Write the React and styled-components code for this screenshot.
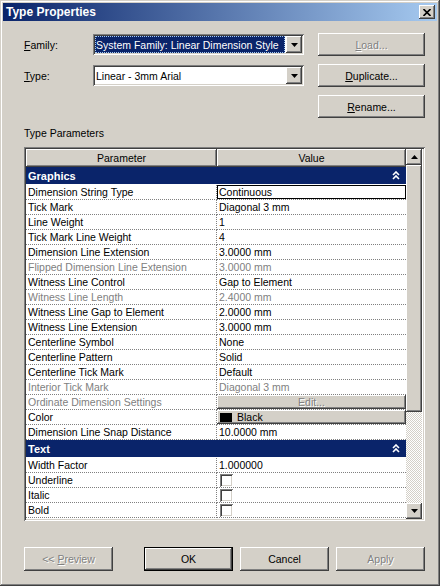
import React from "react";
import styled, { createGlobalStyle, css } from "styled-components";

const Global = createGlobalStyle`
  html, body { margin: 0; padding: 0; background: #d4d0c8; }
  body { font-family: "Liberation Sans", Arial, sans-serif; font-size: 10.5px; color: #000; }
`;

const raised = css`
  background: #d4d0c8;
  box-shadow: inset -1px -1px #404040, inset 1px 1px #fff, inset -2px -2px #808080, inset 2px 2px #d4d0c8;
`;

const sunken = css`
  box-shadow: inset 1px 1px #808080, inset -1px -1px #fff, inset 2px 2px #404040, inset -2px -2px #d4d0c8;
`;

const disabledText = css`
  color: #808080;
  text-shadow: 1px 1px #fff;
`;

const Window = styled.div`
  box-sizing: border-box;
  width: 440px;
  height: 586px;
  padding: 3px;
  background: #d4d0c8;
  box-shadow: inset -1px -1px #404040, inset 1px 1px #d4d0c8, inset -2px -2px #808080, inset 2px 2px #fff;
  display: flex;
  flex-direction: column;
`;

const TitleBar = styled.div`
  height: 18px;
  flex: none;
  display: flex;
  align-items: center;
  justify-content: space-between;
  padding: 0 2px 0 3px;
  background: linear-gradient(to right, #0a246a, #a6caf0);
  color: #fff;
  font-weight: bold;
  font-size: 12px;
`;

const CloseBtn = styled.div`
  ${raised};
  width: 16px;
  height: 14px;
  display: flex;
  align-items: center;
  justify-content: center;
`;

const Body = styled.div`
  flex: 1;
  display: flex;
  flex-direction: column;
  padding: 12px 12px 12px 21px;
`;

const Top = styled.div`
  display: flex;
  gap: 14px;
`;

const Fields = styled.div`
  width: 280px;
  display: flex;
  flex-direction: column;
  gap: 8px;
`;

const Field = styled.div`
  height: 23px;
  display: flex;
  align-items: center;
`;

const Label = styled.span`
  width: 69px;
`;

const Select = styled.div`
  ${sunken};
  box-sizing: border-box;
  width: 211px;
  height: 21px;
  background: #fff;
  display: flex;
  padding: 2px;
  gap: 1px;
`;

const SelectText = styled.div`
  flex: 1;
  display: flex;
  align-items: center;
  padding-left: 1px;
  overflow: hidden;
  white-space: nowrap;
  ${(p) =>
    p.$selected &&
    css`
      background: #0a246a;
      color: #fff;
      outline: 1px dotted #a6caf0;
      outline-offset: -1px;
    `}
`;

const ArrowBtn = styled.div`
  ${raised};
  width: 16px;
  flex: none;
  display: flex;
  align-items: center;
  justify-content: center;
`;

const SideButtons = styled.div`
  width: 107px;
  display: flex;
  flex-direction: column;
  gap: 8px;
`;

const Button = styled.div`
  ${raised};
  box-sizing: border-box;
  height: ${(p) => p.$h || 23}px;
  width: ${(p) => (p.$w ? `${p.$w}px` : "auto")};
  display: flex;
  align-items: center;
  justify-content: center;
  ${(p) => p.$disabled && disabledText};
  ${(p) =>
    p.$default &&
    css`
      box-shadow: inset 1px 1px #000, inset -1px -1px #000, inset -2px -2px #404040, inset 2px 2px #fff,
        inset -3px -3px #808080;
    `}
`;

const SectionLabel = styled.div`
  margin-top: 9px;
  line-height: 13px;
`;

const Table = styled.div`
  ${sunken};
  margin-top: 7px;
  height: 374px;
  box-sizing: border-box;
  padding: 2px;
  display: flex;
  background: #fff;
`;

const Grid = styled.div`
  width: 380px;
  display: flex;
  flex-direction: column;
`;

const Row = styled.div`
  display: grid;
  grid-template-columns: 191px 189px;
  height: ${(p) => p.$h || 15}px;
  box-sizing: border-box;
`;

const HeadCell = styled.div`
  ${raised};
  display: flex;
  align-items: center;
  justify-content: center;
`;

const GroupRow = styled.div`
  height: 18px;
  box-sizing: border-box;
  background: #0a246a;
  color: #fff;
  font-weight: bold;
  font-size: 11px;
  display: flex;
  align-items: center;
  justify-content: space-between;
  padding: 0 6px 0 2px;
  border-bottom: 1px solid #fff;
`;

const Cell = styled.div`
  box-sizing: border-box;
  display: flex;
  align-items: center;
  padding-left: 2px;
  white-space: nowrap;
  overflow: hidden;
  border-bottom: 1px dotted #808080;
  ${(p) => p.$param && "border-right: 1px dotted #808080;"}
  ${(p) => p.$muted && "color: #808080;"}
  ${(p) => p.$focus && "box-shadow: inset 0 0 0 1px #000;"}
  ${(p) => p.$flush && "padding: 0;"}
`;

const CellButton = styled.div`
  ${raised};
  flex: 1;
  height: 100%;
  display: flex;
  align-items: center;
  justify-content: ${(p) => (p.$left ? "flex-start" : "center")};
  padding-left: ${(p) => (p.$left ? "3px" : "0")};
  gap: 5px;
  ${(p) => p.$disabled && disabledText};
`;

const Swatch = styled.span`
  width: 12px;
  height: 9px;
  background: #000;
`;

const Check = styled.span`
  ${sunken};
  width: 13px;
  height: 13px;
  background: #fff;
  margin-left: 1px;
`;

const ScrollBar = styled.div`
  width: 16px;
  display: flex;
  flex-direction: column;
`;

const ScrollBtn = styled.div`
  ${raised};
  height: 16px;
  flex: none;
  display: flex;
  align-items: center;
  justify-content: center;
`;

const Thumb = styled.div`
  ${raised};
  height: 247px;
  flex: none;
`;

const Track = styled.div`
  flex: 1;
  background: repeating-conic-gradient(#fff 0 25%, #d4d0c8 0 50%) 0 0 / 2px 2px;
`;

const Footer = styled.div`
  margin-top: 26px;
  display: flex;
  justify-content: space-between;
`;

const FooterGroup = styled.div`
  display: flex;
  gap: 7px;
`;

const Tri = ({ up }) => (
  <svg width="7" height="4" viewBox="0 0 7 4">
    <path d={up ? "M3.5 0 L7 4 L0 4 Z" : "M0 0 L7 0 L3.5 4 Z"} fill="#000" />
  </svg>
);

const Chevrons = () => (
  <svg width="8" height="9" viewBox="0 0 8 9">
    <path d="M1 4 L4 1 L7 4 M1 8 L4 5 L7 8" stroke="#fff" strokeWidth="1.6" fill="none" />
  </svg>
);

const rows = [
  { group: "Graphics" },
  { p: "Dimension String Type", v: "Continuous", focus: true },
  { p: "Tick Mark", v: "Diagonal 3 mm" },
  { p: "Line Weight", v: "1" },
  { p: "Tick Mark Line Weight", v: "4" },
  { p: "Dimension Line Extension", v: "3.0000 mm" },
  { p: "Flipped Dimension Line Extension", v: "3.0000 mm", muted: true },
  { p: "Witness Line Control", v: "Gap to Element" },
  { p: "Witness Line Length", v: "2.4000 mm", muted: true },
  { p: "Witness Line Gap to Element", v: "2.0000 mm" },
  { p: "Witness Line Extension", v: "3.0000 mm" },
  { p: "Centerline Symbol", v: "None" },
  { p: "Centerline Pattern", v: "Solid" },
  { p: "Centerline Tick Mark", v: "Default" },
  { p: "Interior Tick Mark", v: "Diagonal 3 mm", muted: true },
  { p: "Ordinate Dimension Settings", kind: "edit", muted: true },
  { p: "Color", kind: "color", v: "Black" },
  { p: "Dimension Line Snap Distance", v: "10.0000 mm" },
  { group: "Text" },
  { p: "Width Factor", v: "1.000000" },
  { p: "Underline", kind: "check" },
  { p: "Italic", kind: "check" },
  { p: "Bold", kind: "check" },
];

const ValueCell = ({ r }) => {
  if (r.kind === "edit")
    return (
      <Cell $flush>
        <CellButton $disabled>Edit...</CellButton>
      </Cell>
    );
  if (r.kind === "color")
    return (
      <Cell $flush>
        <CellButton $left>
          <Swatch />
          {r.v}
        </CellButton>
      </Cell>
    );
  if (r.kind === "check")
    return (
      <Cell>
        <Check />
      </Cell>
    );
  return (
    <Cell $muted={r.muted} $focus={r.focus}>
      {r.v}
    </Cell>
  );
};

export default function App() {
  return (
    <>
      <Global />
      <Window>
        <TitleBar>
          <span>Type Properties</span>
          <CloseBtn>
            <svg width="8" height="7" viewBox="0 0 8 7">
              <path d="M0.5 0 L7.5 7 M7.5 0 L0.5 7" stroke="#000" strokeWidth="1.6" />
            </svg>
          </CloseBtn>
        </TitleBar>
        <Body>
          <Top>
            <Fields>
              <Field>
                <Label>
                  <u>F</u>amily:
                </Label>
                <Select>
                  <SelectText $selected>System Family: Linear Dimension Style</SelectText>
                  <ArrowBtn>
                    <Tri />
                  </ArrowBtn>
                </Select>
              </Field>
              <Field>
                <Label>
                  <u>T</u>ype:
                </Label>
                <Select>
                  <SelectText>Linear - 3mm Arial</SelectText>
                  <ArrowBtn>
                    <Tri />
                  </ArrowBtn>
                </Select>
              </Field>
            </Fields>
            <SideButtons>
              <Button $disabled>
                <span>
                  <u>L</u>oad...
                </span>
              </Button>
              <Button>
                <span>
                  <u>D</u>uplicate...
                </span>
              </Button>
              <Button>
                <span>
                  <u>R</u>ename...
                </span>
              </Button>
            </SideButtons>
          </Top>
          <SectionLabel>Type Parameters</SectionLabel>
          <Table>
            <Grid>
              <Row $h={18}>
                <HeadCell>Parameter</HeadCell>
                <HeadCell>Value</HeadCell>
              </Row>
              {rows.map((r, i) =>
                r.group ? (
                  <GroupRow key={i}>
                    <span>{r.group}</span>
                    <Chevrons />
                  </GroupRow>
                ) : (
                  <Row key={i}>
                    <Cell $param $muted={r.muted}>
                      {r.p}
                    </Cell>
                    <ValueCell r={r} />
                  </Row>
                )
              )}
            </Grid>
            <ScrollBar>
              <ScrollBtn>
                <Tri up />
              </ScrollBtn>
              <Thumb />
              <Track />
              <ScrollBtn>
                <Tri />
              </ScrollBtn>
            </ScrollBar>
          </Table>
          <Footer>
            <Button $w={89} $h={24} $disabled>
              <span>
                &lt;&lt; <u>P</u>review
              </span>
            </Button>
            <FooterGroup>
              <Button $w={89} $h={24} $default>
                OK
              </Button>
              <Button $w={89} $h={24}>
                Cancel
              </Button>
              <Button $w={89} $h={24} $disabled>
                Apply
              </Button>
            </FooterGroup>
          </Footer>
        </Body>
      </Window>
    </>
  );
}
